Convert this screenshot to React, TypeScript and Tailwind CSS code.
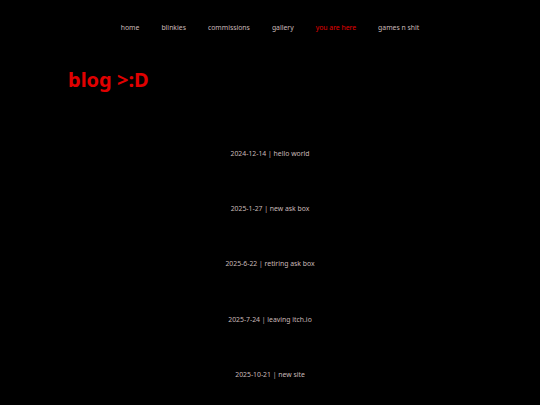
export default function App() {
  const nav = ["home", "blinkies", "commissions", "gallery", "you are here", "games n shit"];
  const posts = [
    "2024-12-14 | hello world",
    "2025-1-27 | new ask box",
    "2025-6-22 | retiring ask box",
    "2025-7-24 | leaving itch.io",
    "2025-10-21 | new site",
  ];
  return (
    <div className="w-[540px] h-[405px] bg-black overflow-hidden font-['Noto_Sans',sans-serif]">
      <nav className="pt-[25px] flex justify-center gap-[22px] text-[6.85px] leading-none">
        {nav.map((n) => (
          <span key={n} className={n === "you are here" ? "text-[#e00000]" : "text-[#c9b9b9]"}>
            {n}
          </span>
        ))}
      </nav>
      <h1 className="mt-[38px] ml-[68px] text-[20px] leading-none font-bold text-[#e00000]">blog &gt;:D</h1>
      <div className="mt-[61px] flex flex-col items-center gap-[48.4px] text-[6.85px] leading-none text-[#c9b9b9]">
        {posts.map((p) => (
          <span key={p}>{p}</span>
        ))}
      </div>
    </div>
  );
}
